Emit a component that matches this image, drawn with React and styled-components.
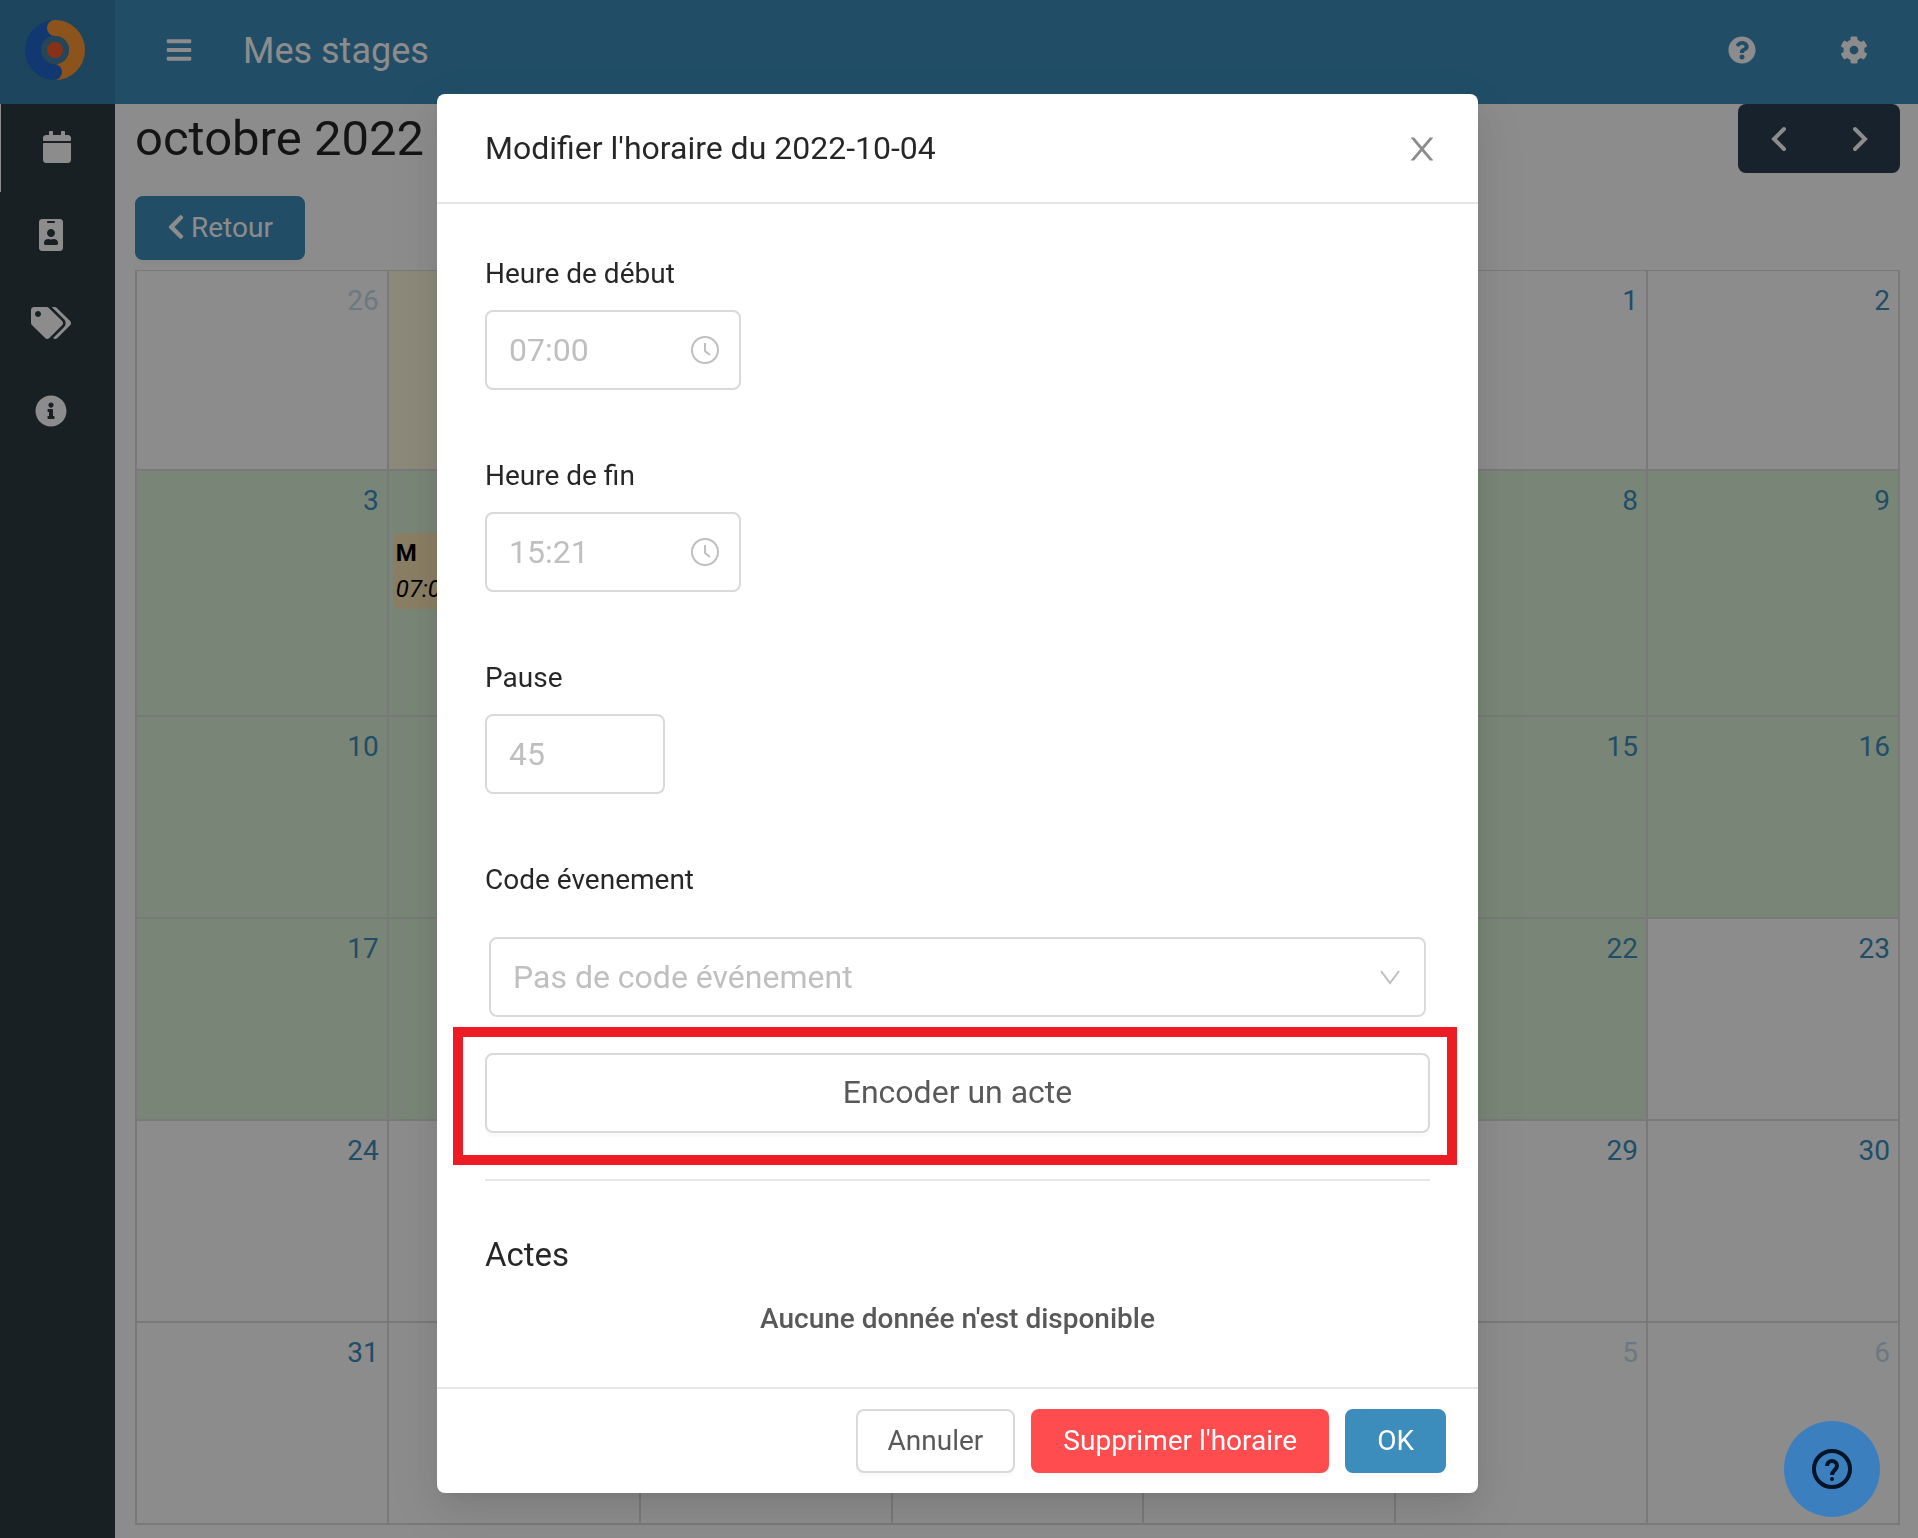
import React from 'react';
import styled, { createGlobalStyle, css } from 'styled-components';
import {
    FaBars,
    FaCalendar,
    FaChevronLeft,
    FaCog,
    FaIdBadge,
    FaInfoCircle,
    FaQuestionCircle,
    FaTags,
} from 'react-icons/fa';

const BG = 'green';
const weeks = [
    [{ d: 26, out: true }, { d: 27, out: true, bg: 'today' }, { d: 28, out: true }, { d: 29, out: true }, { d: 30, out: true }, { d: 1 }, { d: 2 }],
    [{ d: 3, bg: BG }, { d: 4, bg: BG, event: { code: 'M', time: '07:00 - 15:21' } }, { d: 5, bg: BG }, { d: 6, bg: BG }, { d: 7, bg: BG }, { d: 8, bg: BG }, { d: 9, bg: BG }],
    [10, 11, 12, 13, 14, 15, 16].map((d) => ({ d, bg: BG })),
    [17, 18, 19, 20, 21, 22, 23].map((d) => ({ d, bg: d < 23 ? BG : undefined })),
    [24, 25, 26, 27, 28, 29, 30].map((d) => ({ d })),
    [{ d: 31 }, ...[1, 2, 3, 4, 5, 6].map((d) => ({ d, out: true }))],
];

const Logo = () => (
    <svg width="60" height="60" viewBox="0 0 60 60" fill="none" aria-hidden="true">
        <path d="M30 8a22 22 0 0 1 0 44" stroke="#ff9933" strokeWidth="16" strokeLinecap="round" />
        <path d="M30 8a22 22 0 0 0 0 44" stroke="#1f66cc" strokeWidth="16" />
        <circle cx="29" cy="52" r="8" fill="#1f66cc" />
        <circle cx="30" cy="8" r="8" fill="#ff9933" />
        <circle cx="30" cy="30" r="14" fill="#4480a0" />
        <circle cx="30" cy="30" r="8" fill="#f55a2d" />
    </svg>
);

const Chevron = ({ right }) => (
    <svg width="16" height="26" viewBox="0 0 16 26" fill="none" aria-hidden="true">
        <path
            d={right ? 'M3 3l10 10L3 23' : 'M13 3L3 13l10 10'}
            stroke="currentColor"
            strokeWidth="4"
            strokeLinecap="round"
        />
    </svg>
);

const CloseIcon = () => (
    <svg width="36" height="36" viewBox="0 0 1024 1024" fill="currentColor" aria-hidden="true">
        <path d="M563.8 512l262.5-312.9c4.4-5.2.7-13.1-6.1-13.1h-79.8c-4.7 0-9.2 2.1-12.3 5.7L511.6 449.8 295.1 191.7c-3-3.6-7.5-5.7-12.3-5.7H203c-6.8 0-10.5 7.9-6.1 13.1L459.4 512 196.9 824.9A7.95 7.95 0 0 0 203 838h79.8c4.7 0 9.2-2.1 12.3-5.7l216.5-258.1 216.5 258.1c3 3.6 7.5 5.7 12.3 5.7h79.8c6.8 0 10.5-7.9 6.1-13.1L563.8 512z" />
    </svg>
);

const ClockIcon = () => (
    <svg width="28" height="28" viewBox="0 0 28 28" fill="none" stroke="currentColor" strokeWidth="2" aria-hidden="true">
        <circle cx="14" cy="14" r="13" />
        <path d="M14 7v8l5 4" />
    </svg>
);

const DownIcon = () => (
    <svg width="24" height="24" viewBox="0 0 24 24" fill="none" stroke="currentColor" strokeWidth="2" aria-hidden="true">
        <path d="M3 6l9 12 9-12" />
    </svg>
);

const HelpIcon = () => (
    <svg width="40" height="40" viewBox="0 0 40 40" fill="none" stroke="#001426" strokeWidth="4" aria-hidden="true">
        <circle cx="20" cy="20" r="18" />
        <path d="M15 17a5 5 0 0 1 10 0c0 4-5 4-5 9" />
        <circle cx="20" cy="30" r="2" fill="#001426" stroke="none" />
    </svg>
);

const TimeField = ({ id, label, value }) => (
    <Field>
        <Label htmlFor={id}>{label}</Label>
        <InputBox $width="256px">
            <Input id={id} type="text" defaultValue={value} disabled />
            <ClockIcon />
        </InputBox>
    </Field>
);

const App = () => {
    return (
        <>
            <GlobalStyle />
            <Page>
                <Header>
                    <LogoLink href="#" aria-label="Accueil">
                        <Logo />
                    </LogoLink>
                    <IconButton aria-label="Menu">
                        <FaBars />
                    </IconButton>
                    <HeaderTitle>Mes stages</HeaderTitle>
                    <HeaderTools>
                        <IconButton aria-label="Aide">
                            <FaQuestionCircle />
                        </IconButton>
                        <IconButton aria-label="Paramètres">
                            <FaCog />
                        </IconButton>
                    </HeaderTools>
                </Header>
                <Body>
                    <Sidebar>
                        <NavItem href="#" $active aria-label="Calendrier"><FaCalendar /></NavItem>
                        <NavItem href="#" aria-label="Profil"><FaIdBadge /></NavItem>
                        <NavItem href="#" aria-label="Codes"><FaTags /></NavItem>
                        <NavItem href="#" aria-label="Informations"><FaInfoCircle /></NavItem>
                    </Sidebar>
                    <Main>
                        <Toolbar>
                            <Month>octobre 2022</Month>
                            <NavGroup>
                                <NavButton aria-label="Mois précédent"><Chevron /></NavButton>
                                <NavButton aria-label="Mois suivant"><Chevron right /></NavButton>
                            </NavGroup>
                        </Toolbar>
                        <BackButton>
                            <FaChevronLeft />
                            Retour
                        </BackButton>
                        <Calendar>
                            <tbody>
                                {weeks.map((week, i) => (
                                    <Week key={i}>
                                        {week.map((day) => (
                                            <Day key={day.d} $bg={day.bg}>
                                                <DayNumber $out={day.out}>{day.d}</DayNumber>
                                                {day.event && (
                                                    <Event>
                                                        <strong>{day.event.code}</strong>
                                                        <em>{day.event.time}</em>
                                                    </Event>
                                                )}
                                            </Day>
                                        ))}
                                    </Week>
                                ))}
                            </tbody>
                        </Calendar>
                    </Main>
                </Body>
            </Page>

            <Mask>
                <Modal role="dialog" aria-labelledby="modal-title">
                    <ModalHeader>
                        <ModalTitle id="modal-title">Modifier l'horaire du 2022-10-04</ModalTitle>
                        <CloseButton aria-label="Fermer">
                            <CloseIcon />
                        </CloseButton>
                    </ModalHeader>
                    <ModalBody>
                        <TimeField id="start" label="Heure de début" value="07:00" />
                        <TimeField id="end" label="Heure de fin" value="15:21" />
                        <Field>
                            <Label htmlFor="pause">Pause</Label>
                            <InputBox $width="180px">
                                <Input id="pause" type="text" defaultValue="45" disabled />
                            </InputBox>
                        </Field>
                        <Label htmlFor="code">Code évenement</Label>
                        <SelectBox>
                            <Select id="code" disabled>
                                <option>Pas de code événement</option>
                            </Select>
                            <DownIcon />
                        </SelectBox>
                        <Highlighted>
                            <BlockButton>Encoder un acte</BlockButton>
                            <Highlight />
                        </Highlighted>
                        <Divider />
                        <SectionTitle>Actes</SectionTitle>
                        <Empty>Aucune donnée n'est disponible</Empty>
                    </ModalBody>
                    <ModalFooter>
                        <Button>Annuler</Button>
                        <Button $color="#ff4d4f">Supprimer l'horaire</Button>
                        <Button $color="#3c8dbc">OK</Button>
                    </ModalFooter>
                </Modal>
            </Mask>

            <HelpButton aria-label="Aide en ligne">
                <HelpIcon />
            </HelpButton>
        </>
    );
};

export default App;

const GlobalStyle = createGlobalStyle`
*, *:before, *:after {
    box-sizing: border-box;
}
body {
    margin: 0;
    background: #fff;
    color: rgba(0, 0, 0, 0.85);
    font-family: Roboto, sans-serif;
    font-size: 28px;
    line-height: 44px;
}
button, input, select {
    font-family: inherit;
    font-size: inherit;
    line-height: inherit;
    margin: 0;
}
`;

const Page = styled.div`
display: flex;
flex-direction: column;
height: 100vh;
overflow: hidden;
`;

const Header = styled.header`
display: flex;
align-items: center;
flex: none;
height: 104px;
padding-right: 36px;
background: #3c8dbc;
color: #fff;
`;

const LogoLink = styled.a`
display: flex;
align-items: center;
justify-content: center;
width: 115px;
height: 100%;
padding-right: 5px;
padding-bottom: 4px;
background: #367fa9;
`;

const IconButton = styled.button`
display: flex;
align-items: center;
justify-content: center;
width: 56px;
height: 100px;
margin: 0 28px 4px 36px;
padding: 0;
border: 0;
background: none;
color: #fff;
font-size: 28px;
`;

const HeaderTitle = styled.h1`
margin: 0 0 2px 8px;
font-size: 36px;
font-weight: 400;
`;

const HeaderTools = styled.div`
display: flex;
margin-left: auto;

button {
    margin: 0 0 4px 56px;
}
`;

const Body = styled.div`
display: flex;
flex: 1;
min-height: 0;
`;

const Sidebar = styled.nav`
flex: none;
width: 115px;
background: #2c3b41;
`;

const NavItem = styled.a`
display: flex;
align-items: center;
justify-content: center;
height: 88px;
padding: 0 13px 2px 0;
color: #fff;
font-size: 32px;

svg {
    width: 40px;
}

${({ $active }) => $active && css`
    padding-right: 1px;
    box-shadow: inset 1px 0 0 #fff;
`}
`;

const Main = styled.main`
flex: 1;
min-width: 0;
padding: 0 18px 0 20px;
`;

const Toolbar = styled.div`
display: flex;
align-items: center;
justify-content: space-between;
margin-bottom: 23px;
`;

const Month = styled.h2`
margin: 0;
font-size: 49px;
font-weight: 400;
`;

const NavGroup = styled.div`
display: flex;
overflow: hidden;
border-radius: 8px;
background: #2c3e50;
`;

const NavButton = styled.button`
display: flex;
align-items: center;
justify-content: center;
width: 81px;
height: 69px;
padding: 0;
border: 0;
background: none;
color: #fff;
`;

const Button = styled.button`
height: 64px;
padding: 0 30px;
border: 2px solid ${({ $color }) => $color || '#d9d9d9'};
border-radius: 8px;
background: ${({ $color }) => $color || '#fff'};
color: ${({ $color }) => ($color ? '#fff' : '#595959')};
box-shadow: 0 4px 0 rgba(0, 0, 0, 0.02);
`;

const BackButton = styled(Button).attrs({ $color: '#3c8dbc' })`
display: flex;
align-items: center;
gap: 6px;
margin-bottom: 10px;

svg {
    width: 18px;
    margin-bottom: 2px;
}
`;

const Calendar = styled.table`
width: 100%;
table-layout: fixed;
border-spacing: 0;
border-left: 2px solid #ddd;
border-top: 1px solid #ddd;
`;

const Week = styled.tr`
height: 202px;

&:first-child {
    height: 200px;
}
`;

const backgrounds = {
    green: '#ddf5d9',
    today: '#fffadf',
};

const Day = styled.td`
padding: 0;
vertical-align: top;
border-right: 2px solid #ddd;
border-bottom: 2px solid #ddd;
background: ${({ $bg }) => backgrounds[$bg] || 'none'};
`;

const DayNumber = styled.div`
padding: 8px 8px 0;
text-align: right;
color: #3c8dbc;
opacity: ${({ $out }) => ($out ? 0.3 : 1)};
`;

const Event = styled.div`
display: flex;
flex-direction: column;
margin: 10px 4px 106px;
padding: 2px 3px;
border-radius: 6px;
background: #fce6b7;
color: #000;
font-size: 24px;
line-height: 36px;
`;

const Mask = styled.div`
position: fixed;
inset: 0;
z-index: 10;
padding: 94px 3px 0 0;
background: rgba(0, 0, 0, 0.45);
`;

const Modal = styled.section`
max-width: 1041px;
margin: 0 auto;
border-radius: 8px;
background: #fff;
box-shadow: 0 6px 12px -8px rgba(0, 0, 0, 0.12), 0 12px 32px rgba(0, 0, 0, 0.08), 0 18px 56px 16px rgba(0, 0, 0, 0.05);
`;

const ModalHeader = styled.div`
display: flex;
align-items: center;
justify-content: space-between;
padding: 32px 38px 32px 48px;
border-bottom: 2px solid #e6e6e6;
`;

const ModalTitle = styled.h2`
margin: 0;
font-size: 32px;
font-weight: 400;
`;

const CloseButton = styled.button`
display: flex;
padding: 2px 0 0;
border: 0;
background: none;
color: #8c8c8c;
`;

const ModalBody = styled.div`
padding: 48px 48px 46px;
`;

const Field = styled.div`
margin-bottom: 64px;
`;

const Label = styled.label`
display: block;
margin-bottom: 14px;
line-height: 44px;
`;

const InputBox = styled.div`
display: flex;
align-items: center;
width: ${({ $width }) => $width};
height: 80px;
padding: 0 20px 0 22px;
border: 2px solid #d9d9d9;
border-radius: 8px;
color: #bfbfbf;

svg {
    flex: none;
}
`;

const Input = styled.input`
flex: 1;
min-width: 0;
padding: 0;
border: 0;
background: none;
color: #bfbfbf;
font-size: 32px;
`;

const SelectBox = styled(InputBox)`
width: auto;
margin: 35px 4px 36px;
padding: 0 22px;
`;

const Select = styled.select`
flex: 1;
min-width: 0;
padding: 0;
border: 0;
appearance: none;
background: none;
color: #bfbfbf;
font-size: 32px;
opacity: 1;
`;

const Highlighted = styled.div`
position: relative;
`;

const BlockButton = styled(Button)`
display: block;
width: 100%;
height: 80px;
padding-bottom: 2px;
font-size: 32px;
`;

const Highlight = styled.div`
position: absolute;
inset: -26px -27px -32px -32px;
border: 10px solid #ec1c24;
pointer-events: none;
`;

const Divider = styled.hr`
margin: 46px 0 52px;
border: 0;
border-top: 2px solid #e6e6e6;
`;

const SectionTitle = styled.h3`
margin: 0 0 20px;
font-size: 33px;
font-weight: 400;
`;

const Empty = styled.p`
margin: 0;
text-align: center;
font-weight: 500;
color: #595959;
`;

const ModalFooter = styled.div`
display: flex;
justify-content: flex-end;
gap: 16px;
padding: 20px 32px;
border-top: 2px solid #e6e6e6;
`;

const HelpButton = styled.button`
position: fixed;
right: 38px;
bottom: 21px;
z-index: 20;
display: flex;
align-items: center;
justify-content: center;
width: 96px;
height: 96px;
padding: 0;
border: 0;
border-radius: 50%;
background: #3b7fbf;
`;
